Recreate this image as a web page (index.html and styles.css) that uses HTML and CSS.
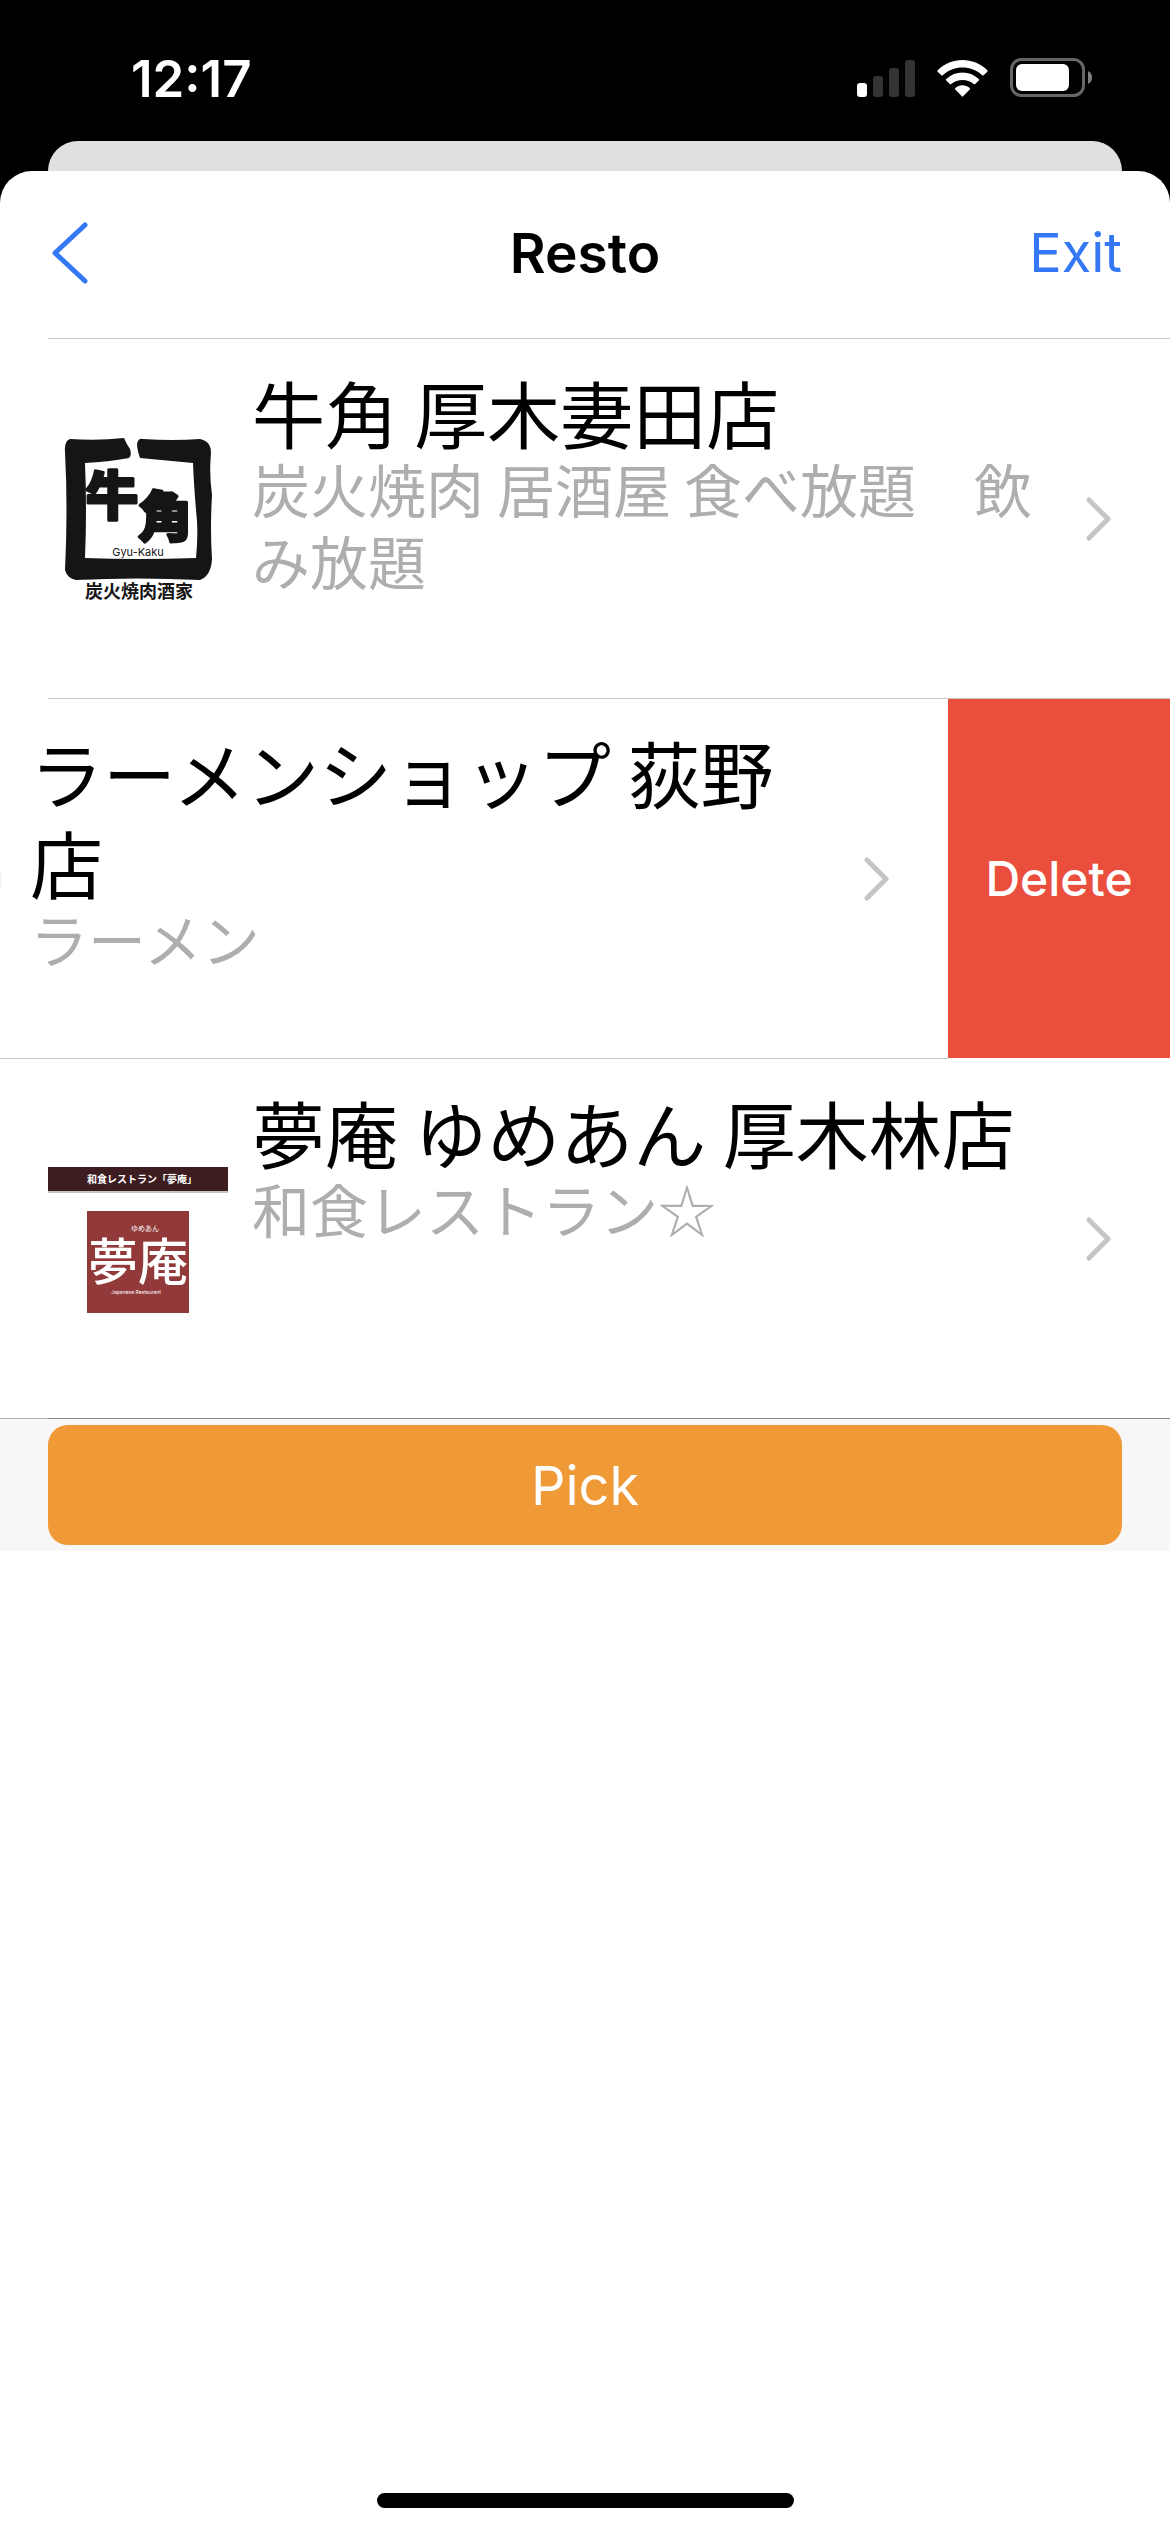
FILE: index.html
```html
<!DOCTYPE html>
<html lang="ja">
<head>
<meta charset="utf-8">
<meta name="viewport" content="width=device-width, initial-scale=1">
<title>Resto</title>
<link rel="stylesheet" href="styles.css">
</head>
<body>
<div class="status">
  <time class="clock">12:17</time>
  <div class="indicators">
    <svg width="58" height="38" viewBox="0 0 58 38" fill="#333" aria-hidden="true">
      <rect x="0" y="24" width="10" height="14" rx="3" fill="#fff"/>
      <rect x="16" y="17" width="10" height="21" rx="3"/>
      <rect x="32" y="9" width="10" height="29" rx="3"/>
      <rect x="48" y="1" width="10" height="37" rx="3"/>
    </svg>
    <svg width="51" height="38" viewBox="0 0 51 38" fill="#fff" aria-hidden="true">
      <path d="M.7 11.2C14.500-2.400 36.500-2.400 50.300 11.200Q51 12 50.300 12.700L46.700 16.200Q46 16.800 45.300 16.200C34 5.900 17 5.900 5.700 16.200Q5 16.800 4.300 16.200L.7 12.700Q0 12 .7 11.200Z"/>
      <path d="M9.200 20C18.500 11.400 32.500 11.400 41.800 20Q42.500 20.700 41.800 21.400L38.200 25Q37.500 25.600 36.800 25C30.200 19.600 20.800 19.600 14.200 25Q13.500 25.600 12.800 25L9.200 21.400Q8.500 20.700 9.200 20Z"/>
      <path d="M18.300 29C22.500 25.400 28.500 25.400 32.700 29Q33.400 29.700 32.700 30.500L26.200 37.300Q25.500 38 24.800 37.300L18.300 30.500Q17.600 29.700 18.300 29Z"/>
    </svg>
    <svg width="82" height="40" viewBox="0 0 82 40" aria-hidden="true">
      <rect x="1.500" y="1.500" width="72" height="36" rx="10" fill="none" stroke="#666" stroke-width="3"/>
      <rect x="6" y="6" width="53" height="27" rx="6" fill="#fff"/>
      <path d="M78 13Q82 15 82 19.500T78 26Z" fill="#808080"/>
    </svg>
  </div>
</div>
<div class="card-behind"></div>
<main class="sheet">
  <header class="nav">
    <button class="nav-button back" type="button" aria-label="Back">
      <svg width="36" height="62" viewBox="0 0 36 62" fill="none" stroke="#3478f6" stroke-width="5" stroke-linecap="round" stroke-linejoin="round"><path d="M33 3L3 31L33 59"/></svg>
    </button>
    <h1 class="nav-title">Resto</h1>
    <button class="nav-button exit" type="button">Exit</button>
  </header>
  <ul class="list">
    <li class="row">
      <a class="cell" href="#gyukaku">
        <svg class="thumb" width="180" height="180" viewBox="0 0 180 180" fill="#151515" aria-hidden="true">
          <path d="M22 10Q50 12 76 9Q79 16 82 20Q84 27 81 29Q60 33 37 34Q39 80 37 129Q90 131 148 129Q150 110 149 92Q146 60 145 34L92 29Q89 20 89 15Q90 9 95 10Q125 12 152 10Q163 12 163 24Q161 45 164 66Q162 100 164 130Q163 147 152 151Q90 148 28 151Q19 149 17 141Q20 80 17 23Q16 12 22 10Z"/>
          <g class="brush">
            <text x="38" y="86" font-size="52">牛</text>
            <text x="90" y="108" font-size="54">角</text>
          </g>
          <text class="latin" x="90" y="127" font-size="11" text-anchor="middle">Gyu-Kaku</text>
          <text class="caption" x="91" y="169" font-size="18" text-anchor="middle">炭火焼肉酒家</text>
        </svg>
        <div class="text">
          <h2 class="name">牛角 厚木妻田店</h2>
          <p class="kind">炭火焼肉 居酒屋 食べ放題　飲み放題</p>
        </div>
        <svg class="chevron" width="26" height="44" viewBox="0 0 26 44"><path d="M3 3L22 22L3 41"/></svg>
      </a>
    </li>
    <li class="row swiped">
      <a class="cell" href="#ramen-shop">
        <svg class="thumb" width="180" height="180" viewBox="0 0 180 180" aria-hidden="true">
          <ellipse cx="90" cy="92" rx="84" ry="46" fill="none" stroke="#f4f4f4" stroke-width="4"/>
        </svg>
        <div class="text">
          <h2 class="name">ラーメンショップ 荻野店</h2>
          <p class="kind">ラーメン</p>
        </div>
        <svg class="chevron" width="26" height="44" viewBox="0 0 26 44"><path d="M3 3L22 22L3 41"/></svg>
      </a>
      <button class="delete" type="button">Delete</button>
    </li>
    <li class="row">
      <a class="cell" href="#yumean">
        <svg class="thumb" width="180" height="180" viewBox="0 0 180 180" fill="#fff" aria-hidden="true">
          <rect y="41" width="180" height="3" fill="#c9c4c4"/>
          <rect y="18" width="180" height="24" fill="#3d1d20"/>
          <text class="caption" x="94" y="34" font-size="10" text-anchor="middle">和食レストラン「夢庵」</text>
          <rect x="39" y="62" width="102" height="102" fill="#923a3a"/>
          <text x="83" y="82" font-size="7">ゆめあん</text>
          <text class="sign" x="90" y="131" font-size="50" text-anchor="middle">夢庵</text>
          <text class="latin" x="88" y="145" font-size="5" text-anchor="middle">Japanese Restaurant</text>
        </svg>
        <div class="text">
          <h2 class="name">夢庵 ゆめあん 厚木林店</h2>
          <p class="kind">和食レストラン☆</p>
        </div>
        <svg class="chevron" width="26" height="44" viewBox="0 0 26 44"><path d="M3 3L22 22L3 41"/></svg>
      </a>
    </li>
  </ul>
  <div class="toolbar">
    <button class="pick" type="button">Pick</button>
  </div>
  <div class="home-indicator"></div>
</main>
</body>
</html>
```
FILE: styles.css
```css
* {
  box-sizing: border-box;
}

body {
  margin: 0;
  min-height: 100vh;
  display: flex;
  flex-direction: column;
  background: #000;
  font-family: Inter, "Noto Sans CJK JP", sans-serif;
}

button {
  padding: 0;
  border: 0;
  background: none;
  font: inherit;
}

svg {
  flex: none;
  display: block;
}

.status {
  display: flex;
  align-items: center;
  justify-content: space-between;
  height: 141px;
  padding: 15px 78px 0 131px;
  color: #fff;
}

.clock {
  font-size: 51px;
  font-weight: 600;
}

.indicators {
  display: flex;
  align-items: center;
  gap: 22px;
}

.card-behind {
  height: 30px;
  margin: 0 48px;
  border-radius: 30px 30px 0 0;
  background: #e0e0e0;
}

.sheet {
  flex: 1;
  display: flex;
  flex-direction: column;
  border-radius: 32px 32px 0 0;
  background: #fff;
}

.nav {
  display: grid;
  grid-template-columns: 1fr auto 1fr;
  align-items: center;
  height: 168px;
  margin-left: 48px;
  padding: 0 48px 4px 0;
  border-bottom: 1px solid #c6c6c8;
}

.nav-title {
  margin: 0;
  font-size: 55px;
  font-weight: 600;
}

.nav-button {
  color: #3478f6;
  font-size: 54px;
}

.back {
  justify-self: start;
  padding-left: 4px;
}

.exit {
  justify-self: end;
}

.list {
  margin: 0;
  padding: 0;
  list-style: none;
}

.row {
  display: flex;
  min-height: 360px;
  overflow: hidden;
}

.cell {
  flex: 0 0 calc(100% - 48px);
  display: flex;
  align-items: center;
  margin-left: 48px;
  padding-right: 58px;
  border-bottom: 1px solid #c6c6c8;
  color: #000;
  text-decoration: none;
}

.swiped .cell {
  margin-left: -174px;
}

.text {
  flex: 1;
  align-self: flex-start;
  margin: 0 36px 0 24px;
  padding-top: 27px;
  font-family: "Noto Sans CJK JP", sans-serif;
}

.name {
  margin: 0;
  font-size: 73px;
  font-weight: 400;
  line-height: 90px;
}

.kind {
  margin: -4px 0 0;
  color: #aeaeb0;
  font-size: 58px;
  line-height: 72px;
}

.chevron {
  fill: none;
  stroke: #c5c5c7;
  stroke-width: 5px;
  stroke-linecap: round;
  stroke-linejoin: round;
}

.delete {
  flex: 0 0 222px;
  margin-bottom: 1px;
  background: #ea4e3d;
  color: #fff;
  font-size: 48px;
  font-weight: 500;
}

.thumb {
  font-family: "Noto Sans CJK JP", sans-serif;
}

.brush {
  font-weight: 900;
  stroke: #151515;
  stroke-width: 3px;
  stroke-linejoin: round;
}

.caption {
  font-weight: 700;
}

.sign {
  font-weight: 500;
}

.latin {
  font-family: Inter, sans-serif;
}

.toolbar {
  position: relative;
  margin-top: -1px;
  padding: 6px 48px;
  border-top: 1px solid rgba(0, 0, 0, 0.3);
  background: #f7f7f8;
  background-clip: padding-box;
}

.pick {
  display: block;
  width: 100%;
  height: 120px;
  border-radius: 20px;
  background: #ef9a37;
  color: #fff;
  font-size: 54px;
}

.home-indicator {
  width: 417px;
  height: 15px;
  margin: auto auto 24px;
  border-radius: 8px;
  background: #000;
}
```
